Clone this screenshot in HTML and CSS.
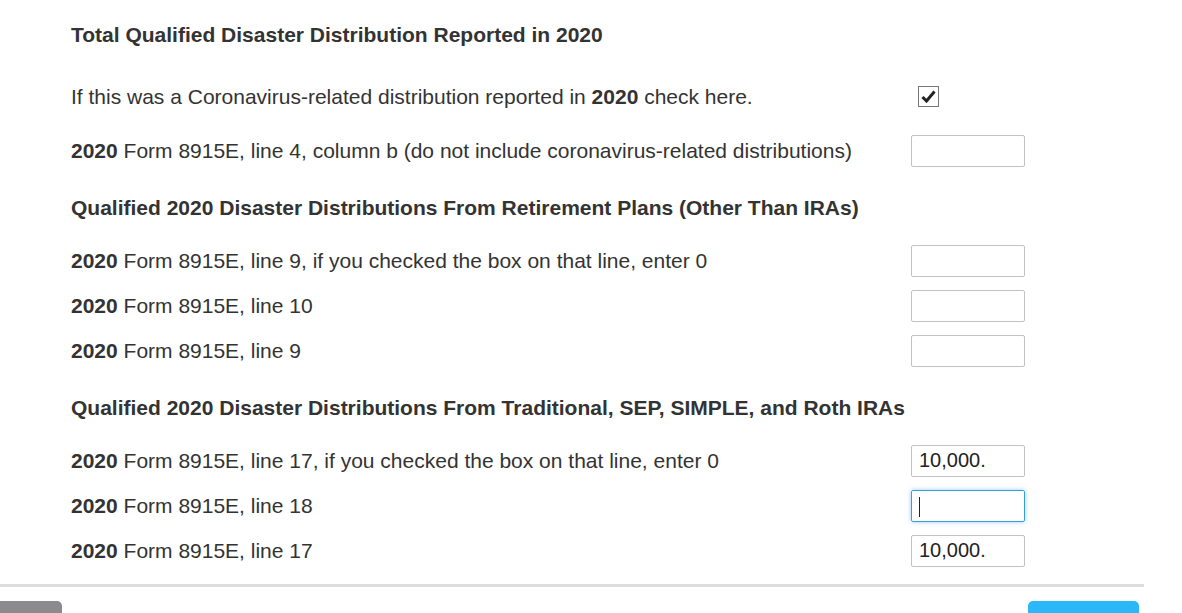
FILE: index.html
```html
<!DOCTYPE html>
<html lang="en">
<head>
    <meta charset="UTF-8">
    <meta name="viewport" content="width=device-width, initial-scale=1.0">
    <title>Qualified Disaster Distributions</title>
    <link rel="stylesheet" href="styles.css">
</head>
<body>
    <div class="form-page">
        <h3 class="first">Total Qualified Disaster Distribution Reported in 2020</h3>

        <div class="row gap-after">
            <span class="label">If this was a Coronavirus-related distribution reported in <b>2020</b> check here.</span>
            <span class="check">
                <svg width="15" height="13" viewBox="0 0 15 13"><path d="M1.5 7 L5.5 11 L13.5 1.5" fill="none" stroke="#222" stroke-width="3"/></svg>
            </span>
        </div>
        <div class="row">
            <span class="label"><b>2020</b> Form 8915E, line 4, column b (do not include coronavirus-related distributions)</span>
            <input type="text" class="amount">
        </div>

        <h3>Qualified 2020 Disaster Distributions From Retirement Plans (Other Than IRAs)</h3>

        <div class="row">
            <span class="label"><b>2020</b> Form 8915E, line 9, if you checked the box on that line, enter 0</span>
            <input type="text" class="amount">
        </div>
        <div class="row">
            <span class="label"><b>2020</b> Form 8915E, line 10</span>
            <input type="text" class="amount">
        </div>
        <div class="row">
            <span class="label"><b>2020</b> Form 8915E, line 9</span>
            <input type="text" class="amount">
        </div>

        <h3>Qualified 2020 Disaster Distributions From Traditional, SEP, SIMPLE, and Roth IRAs</h3>

        <div class="row">
            <span class="label"><b>2020</b> Form 8915E, line 17, if you checked the box on that line, enter 0</span>
            <input type="text" class="amount" value="10,000.">
        </div>
        <div class="row">
            <span class="label"><b>2020</b> Form 8915E, line 18</span>
            <input type="text" class="amount focused" value="">
        </div>
        <div class="row">
            <span class="label"><b>2020</b> Form 8915E, line 17</span>
            <input type="text" class="amount" value="10,000.">
        </div>
    </div>

    <hr class="divider">

    <div class="actions">
        <button type="button" class="btn-back"></button>
        <button type="button" class="btn-next"></button>
    </div>
</body>
</html>
```

FILE: styles.css
```css
body {
    margin: 0;
    font-family: "Liberation Sans", Arial, sans-serif;
    color: #333;
    background-color: #fff;
    overflow: hidden;
}
.form-page {
    padding: 24px 0 0 71px;
    width: 954px;
}
h3 {
    font-size: 21px;
    line-height: 22px;
    margin: 24px 0 19px;
}
h3.first {
    margin: 0 0 28px;
}
.row {
    display: flex;
    align-items: center;
    justify-content: space-between;
    height: 45px;
    font-size: 21px;
}
.gap-after {
    margin-bottom: 9px;
}
.check {
    width: 19px;
    height: 19px;
    border: 1px solid #767676;
    display: flex;
    align-items: center;
    justify-content: center;
    margin-right: 86px;
}
.amount {
    box-sizing: border-box;
    width: 114px;
    height: 32px;
    border: 1px solid #c2c2c2;
    border-radius: 2px;
    padding: 0 7px;
    font-family: "Liberation Sans", Arial, sans-serif;
    font-size: 20px;
    color: #222;
    outline: none;
}
.focused {
    border-color: #3a9fd8;
    box-shadow: 0 0 4px rgba(70, 170, 235, 0.6);
    background: linear-gradient(#222, #222) no-repeat 7px 6px / 1px 20px;
}
.divider {
    width: 1144px;
    margin: 11px 0 0;
    border: none;
    height: 3px;
    background-color: #ddd;
}
.actions {
    display: flex;
    justify-content: space-between;
    width: 1139px;
    margin-top: 14px;
}
.btn-back, .btn-next {
    border: none;
    height: 40px;
    border-radius: 5px;
    padding: 0;
}
.btn-back {
    width: 62px;
    background-color: #8b8b8f;
    border-top-left-radius: 0;
}
.btn-next {
    width: 111px;
    background-color: #2bb8f8;
}
```
